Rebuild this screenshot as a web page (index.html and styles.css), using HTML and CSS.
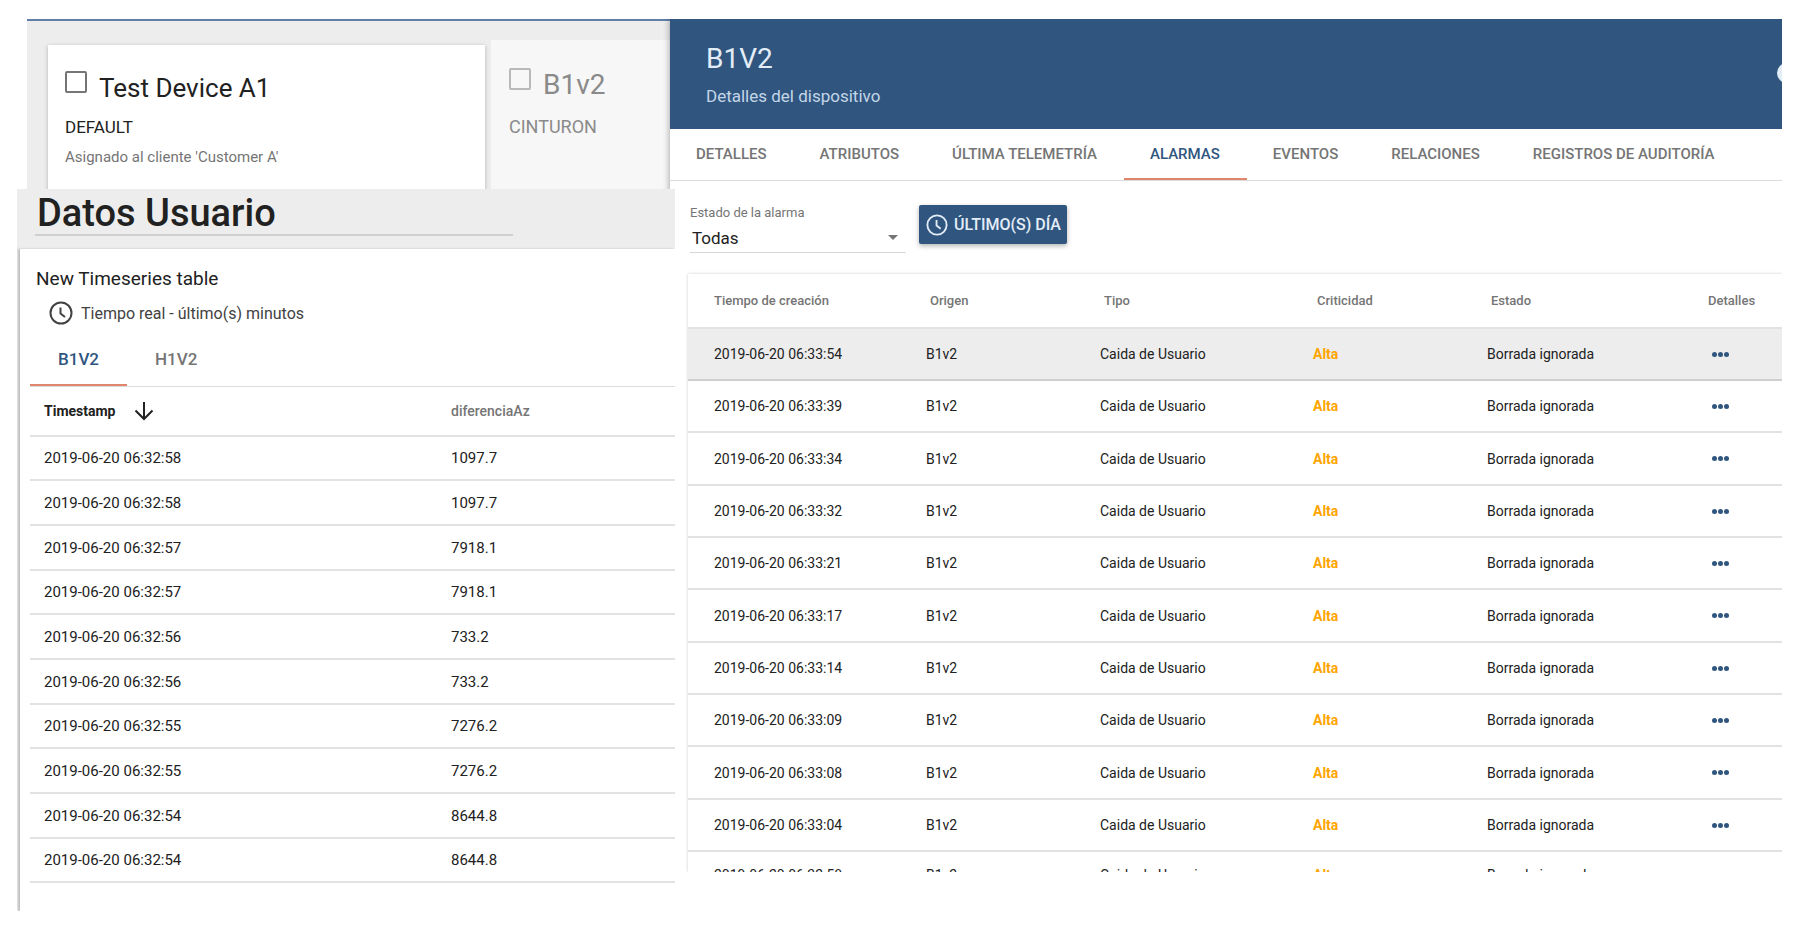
FILE: index.html
```html
<!DOCTYPE html>
<html lang="es">

<head>
    <meta charset="UTF-8">
    <meta name="viewport" content="width=device-width, initial-scale=1.0">
    <title>Dispositivos</title>

    <link rel="stylesheet" href="styles.css">
</head>

<body>

    <main class="page">

        <div class="left">
            <!-- Device cards -->
            <section class="devices">
                <article class="device-card">
                    <div class="device-head">
                        <input type="checkbox" id="device-a1">
                        <label for="device-a1">Test Device A1</label>
                    </div>
                    <p class="device-type">DEFAULT</p>
                    <p class="device-customer">Asignado al cliente 'Customer A'</p>
                </article>
                <article class="device-card faded">
                    <div class="device-head">
                        <input type="checkbox" id="device-b1">
                        <label for="device-b1">B1v2</label>
                    </div>
                    <p class="device-type">CINTURON</p>
                </article>
            </section>

            <!-- User dashboard -->
            <section class="dashboard">
                <h1>Datos Usuario</h1>

                <div class="widget">
                    <h2>New Timeseries table</h2>
                    <button class="timewindow">
                        <svg width="24" height="24" viewBox="0 0 24 24" fill="none" stroke="currentColor" stroke-width="2">
                            <circle cx="12" cy="12" r="10.5" />
                            <path d="M11.5 6.5v6l4.5 3.5" />
                        </svg>
                        Tiempo real - último(s) minutos
                    </button>

                    <nav class="tabs widget-tabs">
                        <a href="#b1v2" class="active">B1V2</a>
                        <a href="#h1v2">H1V2</a>
                    </nav>

                    <table class="series">
                        <thead>
                            <tr>
                                <th class="sorted">
                                    <span>Timestamp
                                        <svg width="20" height="20" viewBox="0 0 20 20" fill="none" stroke="currentColor" stroke-width="2">
                                            <path d="M10 1v17M1.5 9.5l8.5 8.5 8.5-8.5" />
                                        </svg>
                                    </span>
                                </th>
                                <th>diferenciaAz</th>
                            </tr>
                        </thead>
                        <tbody>
                            <tr><td>2019-06-20 06:32:58</td><td>1097.7</td></tr>
                            <tr><td>2019-06-20 06:32:58</td><td>1097.7</td></tr>
                            <tr><td>2019-06-20 06:32:57</td><td>7918.1</td></tr>
                            <tr><td>2019-06-20 06:32:57</td><td>7918.1</td></tr>
                            <tr><td>2019-06-20 06:32:56</td><td>733.2</td></tr>
                            <tr><td>2019-06-20 06:32:56</td><td>733.2</td></tr>
                            <tr><td>2019-06-20 06:32:55</td><td>7276.2</td></tr>
                            <tr><td>2019-06-20 06:32:55</td><td>7276.2</td></tr>
                            <tr><td>2019-06-20 06:32:54</td><td>8644.8</td></tr>
                            <tr><td>2019-06-20 06:32:54</td><td>8644.8</td></tr>
                        </tbody>
                    </table>
                </div>
            </section>
        </div>

        <!-- Device details -->
        <section class="details">
            <header class="details-header">
                <h2>B1V2</h2>
                <p>Detalles del dispositivo</p>
                <button class="help" aria-label="Ayuda"></button>
            </header>

            <nav class="tabs details-tabs">
                <a href="#detalles">DETALLES</a>
                <a href="#atributos">ATRIBUTOS</a>
                <a href="#telemetria">ÚLTIMA TELEMETRÍA</a>
                <a href="#alarmas" class="active">ALARMAS</a>
                <a href="#eventos">EVENTOS</a>
                <a href="#relaciones">RELACIONES</a>
                <a href="#auditoria">REGISTROS DE AUDITORÍA</a>
            </nav>

            <div class="filters">
                <div class="field">
                    <label for="alarm-status">Estado de la alarma</label>
                    <select id="alarm-status">
                        <option>Todas</option>
                    </select>
                    <svg class="caret" width="10" height="5" viewBox="0 0 12 6"><path d="M0 0h12l-6 6z" fill="#757575" /></svg>
                </div>
                <button class="range">
                    <svg width="22" height="22" viewBox="0 0 24 24" fill="none" stroke="currentColor" stroke-width="2">
                        <circle cx="12" cy="12" r="10.5" />
                        <path d="M11.5 6.5v6l4.5 3.5" />
                    </svg>
                    ÚLTIMO(S) DÍA
                </button>
            </div>

            <div class="alarms-card">
                <table class="alarms">
                    <colgroup>
                        <col class="col-time">
                        <col class="col-origin">
                        <col class="col-type">
                        <col class="col-severity">
                        <col class="col-status">
                        <col class="col-details">
                    </colgroup>
                    <thead>
                        <tr>
                            <th>Tiempo de creación</th>
                            <th>Origen</th>
                            <th>Tipo</th>
                            <th>Criticidad</th>
                            <th>Estado</th>
                            <th>Detalles</th>
                        </tr>
                    </thead>
                    <tbody>
                        <tr class="selected"><td>2019-06-20 06:33:54</td><td>B1v2</td><td>Caida de Usuario</td><td class="high">Alta</td><td>Borrada ignorada</td><td><button class="more" aria-label="Detalles"><i></i><i></i><i></i></button></td></tr>
                        <tr><td>2019-06-20 06:33:39</td><td>B1v2</td><td>Caida de Usuario</td><td class="high">Alta</td><td>Borrada ignorada</td><td><button class="more" aria-label="Detalles"><i></i><i></i><i></i></button></td></tr>
                        <tr><td>2019-06-20 06:33:34</td><td>B1v2</td><td>Caida de Usuario</td><td class="high">Alta</td><td>Borrada ignorada</td><td><button class="more" aria-label="Detalles"><i></i><i></i><i></i></button></td></tr>
                        <tr><td>2019-06-20 06:33:32</td><td>B1v2</td><td>Caida de Usuario</td><td class="high">Alta</td><td>Borrada ignorada</td><td><button class="more" aria-label="Detalles"><i></i><i></i><i></i></button></td></tr>
                        <tr><td>2019-06-20 06:33:21</td><td>B1v2</td><td>Caida de Usuario</td><td class="high">Alta</td><td>Borrada ignorada</td><td><button class="more" aria-label="Detalles"><i></i><i></i><i></i></button></td></tr>
                        <tr><td>2019-06-20 06:33:17</td><td>B1v2</td><td>Caida de Usuario</td><td class="high">Alta</td><td>Borrada ignorada</td><td><button class="more" aria-label="Detalles"><i></i><i></i><i></i></button></td></tr>
                        <tr><td>2019-06-20 06:33:14</td><td>B1v2</td><td>Caida de Usuario</td><td class="high">Alta</td><td>Borrada ignorada</td><td><button class="more" aria-label="Detalles"><i></i><i></i><i></i></button></td></tr>
                        <tr><td>2019-06-20 06:33:09</td><td>B1v2</td><td>Caida de Usuario</td><td class="high">Alta</td><td>Borrada ignorada</td><td><button class="more" aria-label="Detalles"><i></i><i></i><i></i></button></td></tr>
                        <tr><td>2019-06-20 06:33:08</td><td>B1v2</td><td>Caida de Usuario</td><td class="high">Alta</td><td>Borrada ignorada</td><td><button class="more" aria-label="Detalles"><i></i><i></i><i></i></button></td></tr>
                        <tr><td>2019-06-20 06:33:04</td><td>B1v2</td><td>Caida de Usuario</td><td class="high">Alta</td><td>Borrada ignorada</td><td><button class="more" aria-label="Detalles"><i></i><i></i><i></i></button></td></tr>
                        <tr><td>2019-06-20 06:32:58</td><td>B1v2</td><td>Caida de Usuario</td><td class="high">Alta</td><td>Borrada ignorada</td><td><button class="more" aria-label="Detalles"><i></i><i></i><i></i></button></td></tr>
                    </tbody>
                </table>
            </div>
        </section>

    </main>

</body>

</html>
```

FILE: styles.css
```css
/* General Styling */
* {
    box-sizing: border-box;
}

body {
    font-family: Roboto, sans-serif;
    background-color: #ffffff;
    margin: 0;
    color: #212121;
}

h1, h2, p {
    margin: 0;
    font-weight: 400;
}

button {
    font-family: inherit;
    border: none;
    padding: 0;
    background: none;
    cursor: pointer;
}

table {
    width: 100%;
    border-collapse: collapse;
    table-layout: fixed;
}

th, td {
    padding: 0;
    text-align: left;
    border-bottom: 2px solid #e2e2e2;
}

th {
    font-size: 13px;
    font-weight: 500;
    color: #757575;
}

/* Page */
.page {
    display: flex;
    align-items: flex-start;
    padding: 19px 21px 0 17px;
}

.left {
    flex: 658 1 0;
    min-width: 0;
}

/* Device Cards */
.devices {
    display: grid;
    grid-template-columns: minmax(0, 437fr) minmax(0, 184fr);
    align-items: start;
    gap: 6px;
    height: 170px;
    margin-left: 10px;
    padding: 19px 0 0 21px;
    background-color: #ededed;
    border-top: 2px solid #5f7fa8;
    overflow: hidden;
}

.device-card {
    height: 160px;
    margin-top: 5px;
    padding: 24px 17px;
    background-color: #ffffff;
    box-shadow: 0 1px 4px rgba(0, 0, 0, 0.25);
}

.device-card.faded {
    margin-top: 0;
    padding: 26px 18px;
    background-color: #f7f7f7;
    box-shadow: none;
    color: #8a8a8a;
}

.device-head {
    display: flex;
    align-items: flex-start;
    gap: 12px;
    height: 44px;
}

.faded .device-head {
    height: 47px;
}

.device-head input {
    appearance: none;
    width: 22px;
    height: 22px;
    margin: 2px 0 0;
    border: 2px solid #757575;
    border-radius: 2px;
}

.faded .device-head input {
    border-color: #b8b8b8;
}

.device-head label {
    font-size: 26px;
    line-height: 38px;
}

.faded .device-head label {
    font-size: 28px;
}

.device-type {
    font-size: 17px;
    line-height: 28px;
}

.faded .device-type {
    font-size: 18px;
}

.device-customer {
    margin-top: 2px;
    font-size: 15px;
    line-height: 28px;
    color: #757575;
}

/* Dashboard */
.dashboard {
    position: relative;
    z-index: 2;
    padding-left: 3px;
    background-color: #ededed;
}

.dashboard h1 {
    width: 73%;
    height: 47px;
    margin: 0 0 13px 15px;
    padding-left: 2px;
    font-size: 38px;
    font-weight: 500;
    line-height: 48px;
    border-bottom: 2px solid #d0d0d0;
}

.widget {
    height: 662px;
    padding: 20px 0 0 10px;
    background-color: #ffffff;
    box-shadow: -2px 0 2px rgba(0, 0, 0, 0.2);
    clip-path: inset(-4px 0 0 -3px);
}

.widget h2 {
    padding-left: 6px;
    font-size: 19px;
    line-height: 20px;
}

.timewindow {
    display: flex;
    align-items: center;
    gap: 8px;
    height: 24px;
    margin: 12px 0 0 19px;
    font-size: 16px;
    color: #424242;
}

/* Tabs */
.tabs {
    display: flex;
    border-bottom: 1px solid #dcdcdc;
}

.tabs a {
    font-size: 15px;
    font-weight: 500;
    color: #757575;
    text-decoration: none;
    padding: 0 27px 0 26px;
    border-bottom: 2px solid transparent;
}

.tabs a.active {
    color: #305680;
    border-bottom-color: #e0866c;
}

.widget-tabs {
    margin-top: 8px;
}

.widget-tabs a {
    height: 53px;
    padding: 0 28px;
    font-size: 17px;
    line-height: 52px;
}

.details-tabs a {
    height: 51px;
    line-height: 50px;
    white-space: nowrap;
}

/* Timeseries Table */
.series th {
    height: 49px;
    font-size: 14px;
}

.series th, .series td {
    padding-left: 14px;
}

.series th:first-child {
    width: 407px;
}

.series th.sorted {
    color: #212121;
    font-weight: 700;
}

.sorted span {
    display: flex;
    align-items: center;
    gap: 18px;
}

.series td {
    height: 45px;
    font-size: 15px;
}

.series tr:nth-child(3n + 1) td {
    height: 44px;
}

/* Device Details */
.details {
    position: relative;
    z-index: 1;
    flex: 1112 1 0;
    min-width: 0;
    margin-left: -5px;
    background-color: #ffffff;
    box-shadow: -1px 0 6px rgba(0, 0, 0, 0.3);
    clip-path: inset(0 0 0 -10px);
}

.details-header {
    position: relative;
    height: 110px;
    padding: 24px 36px;
    background-color: #305680;
    color: #e3edf7;
    overflow: hidden;
}

.details-header h2 {
    font-size: 28px;
    line-height: 32px;
}

.details-header p {
    margin-top: 10px;
    font-size: 17px;
    line-height: 22px;
    color: #c3d5e8;
}

.help {
    position: absolute;
    top: 44px;
    right: -15px;
    width: 20px;
    height: 20px;
    border-radius: 50%;
    background-color: #e3edf7;
}

/* Filters */
.filters {
    display: flex;
    align-items: flex-start;
    gap: 13px;
    padding: 24px 20px 21px;
}

.field {
    position: relative;
    width: 216px;
}

.field label {
    display: block;
    font-size: 13px;
    line-height: 15px;
    color: #757575;
}

.field select {
    appearance: none;
    width: 100%;
    height: 33px;
    padding: 4px 2px 0;
    font-family: inherit;
    font-size: 17px;
    color: #212121;
    background: none;
    border: none;
    border-bottom: 1px solid #d6d6d6;
    border-radius: 0;
}

.caret {
    position: absolute;
    right: 8px;
    top: 30px;
}

.range {
    display: flex;
    align-items: center;
    gap: 6px;
    height: 39px;
    padding: 0 6px 0 7px;
    font-size: 16px;
    font-weight: 500;
    color: #e3edf7;
    background-color: #305680;
    border-radius: 2px;
    box-shadow: 0 2px 5px rgba(0, 0, 0, 0.3);
}

/* Alarms Table */
.alarms-card {
    height: 598px;
    margin-left: 18px;
    box-shadow: 0 0 3px rgba(0, 0, 0, 0.2);
    overflow: hidden;
}

.alarms th {
    height: 54px;
    padding-left: 4px;
}

.alarms th:first-child, .alarms td:first-child {
    padding-left: 26px;
}

.alarms td {
    height: 52px;
    font-size: 14px;
}

.alarms tr:nth-child(3n) td {
    height: 53px;
}

.alarms tr:last-child td {
    height: 48px;
}

.alarms .selected td {
    background-color: #ededed;
    border-bottom-color: #cfcfcf;
}

.alarms td.high {
    font-weight: 700;
    color: #ffa500;
}

.col-time {
    width: 238px;
}

.col-origin, .col-severity {
    width: 174px;
}

.col-type {
    width: 213px;
}

.col-status {
    width: 217px;
}

.more {
    display: flex;
    gap: 1px;
    padding: 8px;
}

.more i {
    width: 5px;
    height: 5px;
    border-radius: 50%;
    background-color: #305680;
}
```
